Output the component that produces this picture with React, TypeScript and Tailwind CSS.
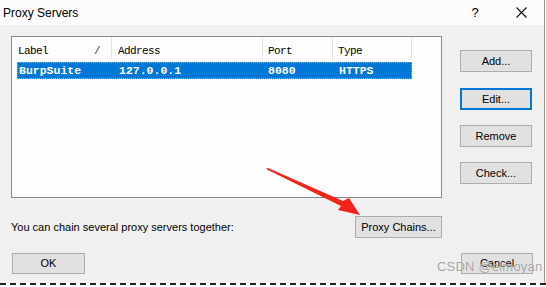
import React from "react";

const Btn = ({ label, className = "", focused = false }: { label: string; className?: string; focused?: boolean }) => (
  <div
    className={
      "flex items-center justify-center bg-[#e1e1e1] text-[11px] text-black leading-none " +
      (focused ? "border-2 border-[#0078d7] " : "border border-[#adadad] ") +
      className
    }
  >
    {label}
  </div>
);

export default function App() {
  const mono = "font-['Liberation_Mono','DejaVu_Sans_Mono',monospace]";
  return (
    <div className="w-[546px] h-[287px] bg-white relative overflow-hidden font-['Liberation_Sans',Arial,sans-serif]">
      <div className="w-[545px] border-r border-[#9a9a9a] flex flex-col">
        {/* title bar */}
        <div className="h-[25px] bg-[#fcfcfd] flex items-center relative">
          <span className="pl-[3px] text-[12px] text-black">Proxy Servers</span>
          <span className="ml-auto w-[12px] text-[13px] text-black text-center mr-[35px]">?</span>
          <svg width="11" height="11" viewBox="0 0 11 11" className="mr-[17px]">
            <path d="M0.5 0.5 L10.5 10.5 M10.5 0.5 L0.5 10.5" stroke="#111" strokeWidth="1.1" />
          </svg>
        </div>
        {/* body */}
        <div className="h-[258px] bg-[#f0f0f0] pl-[11px] pt-[11px] flex flex-col">
          <div className="flex">
            {/* list */}
            <div className="w-[431px] h-[162px] bg-[#fdfdfe] border border-[#878b94] flex flex-col">
              <div className={"h-[22px] flex text-[11px] tracking-[-0.6px] text-black " + mono}>
                <div className="w-[100px] border-r border-[#e3e3e3] pl-[6px] pt-[7px] flex items-center justify-between pr-[11px]">
                  <span>Label</span>
                  <span className="text-[#444]">/</span>
                </div>
                <div className="w-[151px] border-r border-[#e3e3e3] pl-[6px] pt-[7px] flex items-center">Address</div>
                <div className="w-[70px] border-r border-[#e3e3e3] pl-[5px] pt-[7px] flex items-center">Port</div>
                <div className="w-[79px] border-r border-[#e3e3e3] pl-[5px] pt-[7px] flex items-center">Type</div>
              </div>
              <div className={"mt-[3px] ml-[5px] w-[395px] h-[17px] bg-[#0078d7] border border-dotted border-[#f7a440] flex items-center text-white font-bold text-[11.5px] " + mono}>
                <div className="w-[101px] pl-[1px]">BurpSuite</div>
                <div className="w-[149px]">127.0.0.1</div>
                <div className="w-[71px]">8080</div>
                <div>HTTPS</div>
              </div>
            </div>
            {/* buttons */}
            <div className="ml-[18px] pt-[14px] flex flex-col">
              <Btn label="Add..." className="w-[72px] h-[22px]" />
              <Btn label="Edit..." focused className="w-[72px] h-[22px] mt-[16px]" />
              <Btn label="Remove" className="w-[72px] h-[22px] mt-[15px]" />
              <Btn label="Check..." className="w-[72px] h-[22px] mt-[15px]" />
            </div>
          </div>
          <div className="w-[431px] mt-[18px] flex items-center justify-between">
            <span className="text-[11px] text-black">You can chain several proxy servers together:</span>
            <Btn label="Proxy Chains..." className="w-[87px] h-[22px]" />
          </div>
          <div className="mt-[15px] flex">
            <Btn label="OK" className="ml-[1px] w-[73px] h-[21px]" />
            <Btn label="Cancel" className="ml-[376px] w-[72px] h-[21px]" />
          </div>
        </div>
      </div>
      <div className="w-[546px] border-t-2 border-dashed border-[#222]" />

      {/* red arrow overlay */}
      <svg className="absolute left-0 top-0 pointer-events-none" width="546" height="287" viewBox="0 0 546 287">
        <polygon
          points="266,169 268,168 343,201 349,198 360,215 338,210 341,206"
          fill="#f5221b"
        />
      </svg>

      {/* watermark */}
      <div className="absolute left-[437px] top-[260px] text-[13px] leading-none text-[#9c9c9c] opacity-90 tracking-[0.2px] [text-shadow:0_0_1px_#fff]">
        CSDN @elmoyan
      </div>
    </div>
  );
}
